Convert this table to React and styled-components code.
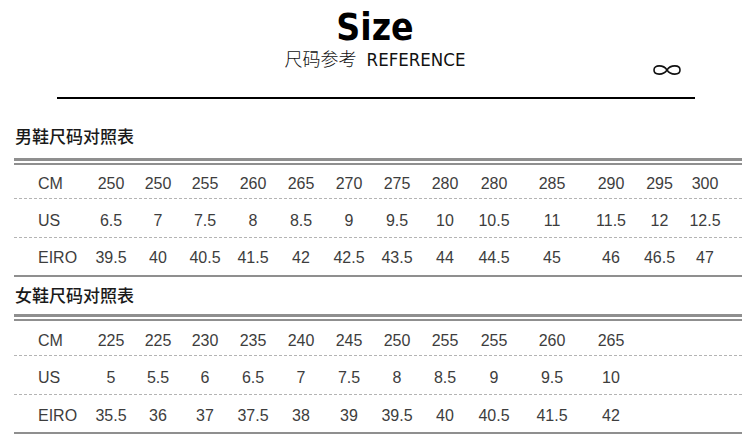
import React from 'react';
import styled, { createGlobalStyle } from 'styled-components';

const GlobalStyle = createGlobalStyle`
  html, body {
    margin: 0;
    padding: 0;
    background: #FFFFFF;
  }
  body {
    overflow: hidden;
  }
`;

const Page = styled.div`
  width: 750px;
  height: 439px;
  background: #FFFFFF;
  display: flex;
  flex-direction: column;
`;

const Header = styled.header`
  display: flex;
  flex-direction: column;
  align-items: center;
  padding-top: 8px;
`;

const Title = styled.h1`
  margin: 0;
  font-family: "DejaVu Sans Condensed", "DejaVu Sans", sans-serif;
  font-stretch: condensed;
  font-weight: 700;
  font-size: 37px;
  line-height: 40px;
  color: #000;
`;

const SubRow = styled.div`
  width: 100%;
  display: grid;
  grid-template-columns: 1fr auto 1fr;
  align-items: start;
`;

const Subtitle = styled.div`
  grid-column: 2;
  font-size: 17px;
  line-height: 20px;
  color: #111;
  display: flex;
  align-items: baseline;
  gap: 10px;
`;

const Cjk = styled.span`
  font-family: "Noto Sans CJK SC", sans-serif;
  font-weight: 300;
  font-size: 18px;
`;

const Latin = styled.span`
  font-family: "DejaVu Sans Condensed", "DejaVu Sans", sans-serif;
  font-weight: 500;
  font-size: 18.5px;
`;

const Mark = styled.div`
  justify-self: end;
  padding-right: 68px;
  padding-top: 15px;
  display: flex;
`;

const Rule = styled.div`
  margin: 20px 55px 0 57px;
  height: 2px;
  background: #000;
`;

const Section = styled.section`
  display: flex;
  flex-direction: column;
  padding: 0 8px 0 14px;
  margin-top: ${p => p.$top}px;
`;

const SectionTitle = styled.h2`
  margin: 0 0 0 1px;
  font-family: "Noto Sans CJK SC", sans-serif;
  font-weight: 500;
  font-size: 17px;
  line-height: 20px;
  color: #1a1a1a;
`;

const DoubleRule = styled.div`
  margin-top: ${p => p.$gap}px;
  height: 7px;
  box-sizing: border-box;
  border-top: 3px solid #8f8f8f;
  border-bottom: 2px solid #8f8f8f;
`;

const Table = styled.div`
  display: flex;
  flex-direction: column;
  border-bottom: 2px solid #8f8f8f;
`;

const Row = styled.div`
  display: grid;
  grid-template-columns: 73px 48px 46px 48px 48px 48px 48px 48px 48px 50px 66px 52px 45px 46px 1fr;
  align-items: center;
  height: ${p => p.$h}px;
  padding-top: ${p => p.$pt}px;
  box-sizing: border-box;
  border-bottom: ${p => (p.$last ? 'none' : '1px dashed #b4b4b4')};
  font-family: "Liberation Sans", Arial, sans-serif;
  font-size: 16px;
  color: #3d3d3d;
`;

const Label = styled.span`
  padding-left: 24px;
`;

const Cell = styled.span`
  text-align: center;
`;

const men = [
  ['CM', ['250', '250', '255', '260', '265', '270', '275', '280', '280', '285', '290', '295', '300']],
  ['US', ['6.5', '7', '7.5', '8', '8.5', '9', '9.5', '10', '10.5', '11', '11.5', '12', '12.5']],
  ['EIRO', ['39.5', '40', '40.5', '41.5', '42', '42.5', '43.5', '44', '44.5', '45', '46', '46.5', '47']],
];

const women = [
  ['CM', ['225', '225', '230', '235', '240', '245', '250', '255', '255', '260', '265']],
  ['US', ['5', '5.5', '6', '6.5', '7', '7.5', '8', '8.5', '9', '9.5', '10']],
  ['EIRO', ['35.5', '36', '37', '37.5', '38', '39', '39.5', '40', '40.5', '41.5', '42']],
];

const Infinity = () => (
  <svg width="30" height="14" viewBox="0 0 30 14">
    <path
      d="M15 7 C11.5 1.5, 2 1.5, 2 7 C2 12.5, 11.5 12.5, 15 7 C18.5 1.5, 28 1.5, 28 7 C28 12.5, 18.5 12.5, 15 7 Z"
      fill="none"
      stroke="#111"
      strokeWidth="1.6"
    />
  </svg>
);

const SizeTable = ({ title, rows, top, gap, heights, pads }) => (
  <Section $top={top}>
    <SectionTitle>{title}</SectionTitle>
    <DoubleRule $gap={gap} />
    <Table>
      {rows.map(([label, values], i) => (
        <Row key={label} $h={heights[i]} $pt={pads[i]} $last={i === rows.length - 1}>
          <Label>{label}</Label>
          {values.map((v, j) => (
            <Cell key={j}>{v}</Cell>
          ))}
        </Row>
      ))}
    </Table>
  </Section>
);

export default function App() {
  return (
    <>
      <GlobalStyle />
      <Page>
        <Header>
          <Title>Size</Title>
          <SubRow>
            <Subtitle>
              <Cjk>尺码参考</Cjk>
              <Latin>REFERENCE</Latin>
            </Subtitle>
            <Mark>
              <Infinity />
            </Mark>
          </SubRow>
        </Header>
        <Rule />
        <SizeTable
          title="男鞋尺码对照表"
          rows={men}
          top={27}
          gap={12}
          heights={[34, 39, 37]}
          pads={[4, 5, 3]}
        />
        <SizeTable
          title="女鞋尺码对照表"
          rows={women}
          top={8}
          gap={9}
          heights={[35, 39, 37]}
          pads={[6, 6, 4]}
        />
      </Page>
    </>
  );
}
